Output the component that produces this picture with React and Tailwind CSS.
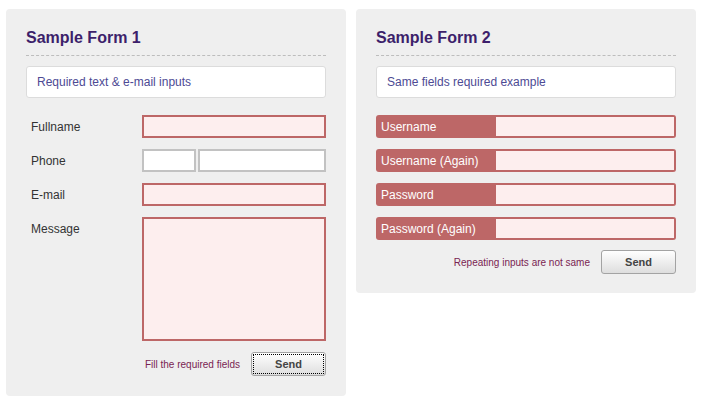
import React from 'react';

const font = { fontFamily: '"Liberation Sans", Arial, sans-serif' };

function Panel({ title, info, children, className = '' }) {
  return (
    <section className={`w-[340px] rounded-[4px] bg-[#efefef] px-5 pt-[19px] ${className}`}>
      <h2 className="h-[28px] border-b border-dashed border-[#bdbdbd] text-[16px] font-bold leading-[20px] text-[#3d1f6b]">
        {title}
      </h2>
      <div className="mt-[10px] flex h-[32px] items-center rounded-[3px] border border-[#dcdcdc] bg-white pl-[10px] text-[12px] text-[#4d4a94]">
        {info}
      </div>
      {children}
    </section>
  );
}

function SendButton({ focused }) {
  return (
    <button className="relative h-[24px] w-[75px] rounded-[3px] border border-[#a3a3a3] bg-gradient-to-b from-white to-[#dedede] text-[11px] font-bold text-[#444]">
      {focused && <span className="absolute inset-[1px] border border-dotted border-black" />}
      <span className="relative">Send</span>
    </button>
  );
}

function LabelRow({ label, children, tall }) {
  return (
    <div className="flex">
      <div className="flex h-[23px] w-[116px] items-center pl-[5px] text-[12px] text-[#333]">{label}</div>
      <div className={`flex flex-1 gap-[2px] ${tall ? 'h-[124px]' : 'h-[23px]'}`}>{children}</div>
    </div>
  );
}

function RedInput() {
  return <div className="h-full flex-1 border-2 border-[#bd6767] bg-[#fdeeee]" />;
}

function PairRow({ label }) {
  return (
    <div className="flex h-[23px] overflow-hidden rounded-[3px] bg-[#bd6767]">
      <div className="flex w-[118px] items-center pl-[5px] text-[12px] text-white">{label}</div>
      <div className="flex-1 border-2 border-[#bd6767] bg-[#fdeeee]" />
    </div>
  );
}

export default function App() {
  return (
    <main className="flex min-h-[402px] items-start gap-[10px] bg-white pl-[6px] pt-[9px]" style={font}>
      <Panel title="Sample Form 1" info="Required text & e-mail inputs" className="pb-5">
        <div className="mt-[17px] flex flex-col gap-[11px]">
          <LabelRow label="Fullname">
            <RedInput />
          </LabelRow>
          <LabelRow label="Phone">
            <div className="h-full w-[54px] border-2 border-[#c2c2c2] bg-white" />
            <div className="h-full flex-1 border-2 border-[#c2c2c2] bg-white" />
          </LabelRow>
          <LabelRow label="E-mail">
            <RedInput />
          </LabelRow>
          <LabelRow label="Message" tall>
            <RedInput />
          </LabelRow>
        </div>
        <div className="mt-[11px] flex items-center justify-end gap-[11px]">
          <span className="text-[10px] text-[#7a2452]">Fill the required fields</span>
          <SendButton focused />
        </div>
      </Panel>

      <Panel title="Sample Form 2" info="Same fields required example" className="pb-[19px]">
        <div className="mt-[17px] flex flex-col gap-[11px]">
          <PairRow label="Username" />
          <PairRow label="Username (Again)" />
          <PairRow label="Password" />
          <PairRow label="Password (Again)" />
        </div>
        <div className="mt-[10px] flex items-center justify-end gap-[11px]">
          <span className="text-[10px] text-[#7a2452]">Repeating inputs are not same</span>
          <SendButton />
        </div>
      </Panel>
    </main>
  );
}
